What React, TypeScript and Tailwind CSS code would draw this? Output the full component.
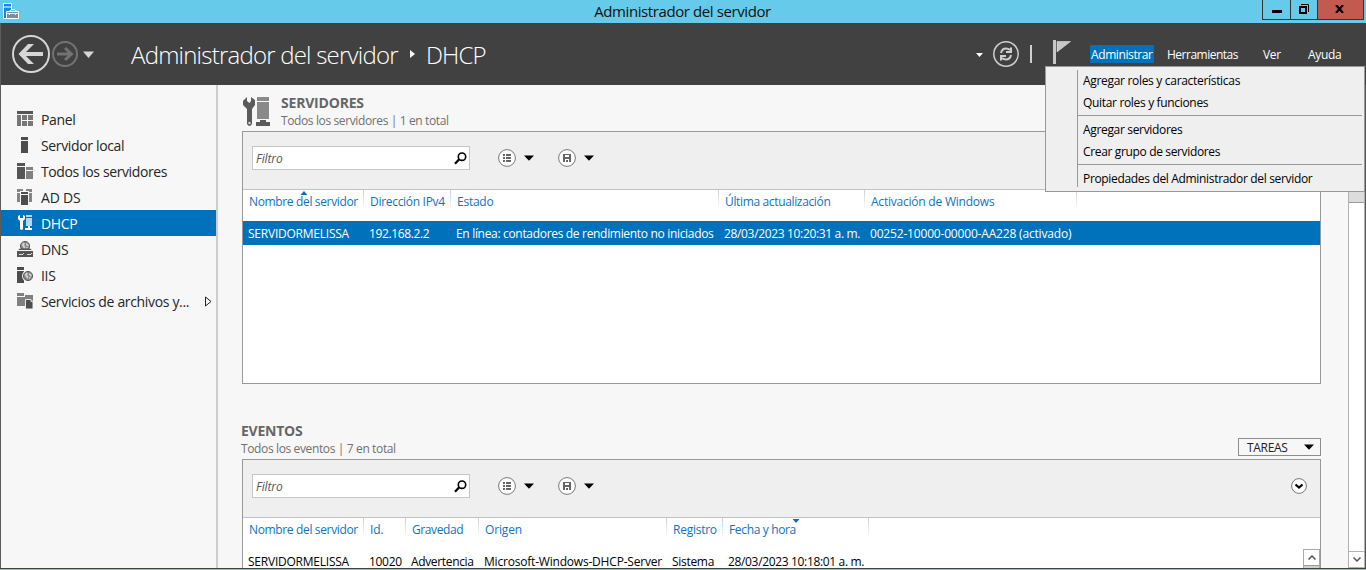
import type { ReactNode } from "react";

type Column = { label: string; cell: string; head: string; body: string; width: string; sort?: "up" | "down" };

const serverColumns: Column[] = [
  { label: "Nombre del servidor", cell: "SERVIDORMELISSA", head: "tracking-[-0.350px]", body: "tracking-[-0.230px]", width: "w-[121px]", sort: "up" },
  { label: "Dirección IPv4", cell: "192.168.2.2", head: "tracking-[-0.300px]", body: "tracking-[-0.380px]", width: "w-[87px]" },
  { label: "Estado", cell: "En línea: contadores de rendimiento no iniciados", head: "tracking-[-0.250px]", body: "tracking-[-0.320px]", width: "w-[268px]" },
  { label: "Última actualización", cell: "28/03/2023 10:20:31 a. m.", head: "tracking-[-0.350px]", body: "tracking-[-0.340px]", width: "w-[146px]" },
  { label: "Activación de Windows", cell: "00252-10000-00000-AA228 (activado)", head: "tracking-[-0.220px]", body: "tracking-[-0.180px]", width: "w-[212px]" },
];

const eventColumns: Column[] = [
  { label: "Nombre del servidor", cell: "SERVIDORMELISSA", head: "tracking-[-0.350px]", body: "tracking-[-0.230px]", width: "w-[121px]" },
  { label: "Id.", cell: "10020", head: "tracking-[-0.100px]", body: "tracking-[-0.300px]", width: "w-[42px]" },
  { label: "Gravedad", cell: "Advertencia", head: "tracking-[-0.400px]", body: "tracking-[-0.350px]", width: "w-[73px]" },
  { label: "Origen", cell: "Microsoft-Windows-DHCP-Server", head: "tracking-[-0.150px]", body: "tracking-[-0.200px]", width: "w-[188px]" },
  { label: "Registro", cell: "Sistema", head: "tracking-[-0.250px]", body: "tracking-[-0.300px]", width: "w-[56px]" },
  { label: "Fecha y hora", cell: "28/03/2023 10:18:01 a. m.", head: "tracking-[-0.350px]", body: "tracking-[-0.340px]", width: "w-[146px]", sort: "down" },
];

function Globe({ cx, cy }: { cx: number; cy: number }) {
  return (
    <g>
      <circle cx={cx} cy={cy} r="4.600" fill="#858585" stroke="#5c5c5c" />
      <path d={`M${cx - 3.5} ${cy - 1.5}l2-2 1.5 1-1 1.5 1.5 1.5-1 2.500-1.500-2zM${cx + 1} ${cy - 3}l2 1 1 2-1.500.500-1.500-1.500zM${cx + 1} ${cy + 1}l2 0-1.500 2.500z`} fill="#d0d0d0" />
    </g>
  );
}

const icons: Record<string, ReactNode> = {
  panel: (
    <>
      <path d="M0 0h16v3H0z" fill="#555" />
      <path d="M0 4h4v11H0zM5 4h5v5H5zM11 4h5v5h-5zM5 10h5v5H5zM11 10h5v5h-5z" fill="#777" />
    </>
  ),
  local: <path d="M4 0h7v3H4zM4 4h7v12H4z" fill="#4d4d4d" />,
  all: (
    <>
      <path d="M0 0h8v3H0zM0 4h8v12H0z" fill="#555" />
      <path d="M9 4h7v3H9zM9 8h7v8H9z" fill="#808080" />
    </>
  ),
  adds: (
    <>
      <path d="M0 0h6v2H3v1H0zM9 0h6v3h-3V2H9zM0 4h3v9H0zM12 4h3v9h-3z" fill="#858585" />
      <path d="M4 3h7v2H4zM4 6h7v10H4z" fill="#4d4d4d" />
    </>
  ),
  dhcp: (
    <>
      <path d="M1 1v3l2 2v8q1.500 2 3 0V6l2-2V1L6 0v3H3V0z" fill="#fff" />
      <path d="M9 0h6v2H9zM9 3h6v8H9z" fill="#b9d9f0" />
      <path d="M11 11h2v2h2v2H8v-2h3z" fill="#fff" />
    </>
  ),
  dns: (
    <>
      <Globe cx={8} cy={5} />
      <path d="M1 8h14v3H1z" fill="#f7f7f7" />
      <path d="M3 7.500h10l2 1.500H1zM0 10h16v6H0z" fill="#555" />
      <path d="M2 13h4v1H2zM10 13h4v1h-4zM6 12h1v1H6zM14 12h1v1h-1z" fill="#ddd" />
    </>
  ),
  iis: (
    <>
      <path d="M0 0h7v3H0zM0 4h7v12H0z" fill="#4d4d4d" />
      <circle cx="11" cy="9" r="6" fill="#f7f7f7" />
      <Globe cx={11} cy={9} />
    </>
  ),
  files: (
    <>
      <path d="M0 0h7v3H0zM0 4h8v9H0zM8 2h8v10H8z" fill="#808080" />
      <path d="M8.500 6.500H14L16 9v7H8.500z" fill="#4d4d4d" stroke="#f7f7f7" strokeWidth="0.9" />
      <path d="M13.500 6.500V9H16z" fill="#ccc" />
    </>
  ),
};

const navigation = [
  { icon: "panel", label: "Panel", spacing: "tracking-[-0.350px]" },
  { icon: "local", label: "Servidor local", spacing: "tracking-[-0.350px]" },
  { icon: "all", label: "Todos los servidores", spacing: "tracking-[-0.380px]" },
  { icon: "adds", label: "AD DS", spacing: "tracking-[-0.2px]" },
  { icon: "dhcp", label: "DHCP", spacing: "tracking-[-0.350px]", active: true },
  { icon: "dns", label: "DNS", spacing: "tracking-[-0.350px]" },
  { icon: "iis", label: "IIS", spacing: "tracking-[-0.3px]" },
  { icon: "files", label: "Servicios de archivos y...", spacing: "tracking-[-0.340px]", expandable: true },
];

function Caret() {
  return (
    <svg className="ml-2 h-[6px] w-[10px]" viewBox="0 0 10 6">
      <path d="M0 .5h10L5 5.800z" fill="#000" />
    </svg>
  );
}

function Toolbar({ collapsible }: { collapsible?: boolean }) {
  return (
    <div className="flex h-[58px] shrink-0 border-b border-[#c3c3c3] bg-[#efefef] pl-[9px] pt-[14px]">
      <div className="flex h-6 w-[218px] items-center justify-between border border-[#c6c6c6] bg-white pl-[3px] pr-[2px]">
        <span className="pt-[2px] text-[12px] italic leading-4 tracking-[-0.100px] text-[#555]">Filtro</span>
        <svg className="h-[13px] w-[13px]" viewBox="0 0 13 13" fill="none" stroke="#000">
          <circle cx="8" cy="4.700" r="3.700" strokeWidth="1.600" />
          <path d="M5 7.500L1 11.700" strokeWidth="2.300" />
        </svg>
      </div>
      <div className="ml-7 mt-[3px] flex h-[18px] items-center">
        <svg className="h-[18px] w-[18px]" viewBox="0 0 18 18">
          <circle cx="9" cy="9" r="8.400" fill="#fff" stroke="#777" />
          <path d="M5 5h2v2H5zM8 5h5v2H8zM5 8h2v2H5zM8 8h5v2H8zM5 11h2v2H5zM8 11h5v2H8z" fill="#666" />
        </svg>
        <Caret />
        <svg className="ml-6 h-[18px] w-[18px]" viewBox="0 0 18 18">
          <circle cx="9" cy="9" r="8.400" fill="#fff" stroke="#777" />
          <path fillRule="evenodd" d="M5 5h8v8H5zM7 6v2h4V6zM7 10v3h1v-2h2v2h1v-3z" fill="#666" />
        </svg>
        <Caret />
      </div>
      {collapsible && (
        <svg className="ml-auto mr-[13px] mt-1 h-4 w-4" viewBox="0 0 16 16" fill="none">
          <circle cx="8" cy="8" r="7.400" fill="#fff" stroke="#777" />
          <path d="M4.500 6.500L8 9.500l3.500-3" stroke="#000" strokeWidth="2.200" />
        </svg>
      )}
    </div>
  );
}

function Grid({ columns, selected }: { columns: Column[]; selected?: boolean }) {
  return (
    <div className="text-[12px] leading-4">
      <div className="flex h-[31px] text-[#1173bd]">
        {columns.map((c) => (
          <div key={c.label} className={`relative flex h-6 shrink-0 items-center whitespace-nowrap pl-[6px] ${c.width}`}>
            <span className={c.head}>{c.label}</span>
            <span className="absolute right-0 top-0 h-5 w-px bg-linear-to-b from-[#cfcfcf] to-white" />
            {c.sort && (
              <svg className="absolute left-1/2 top-[1px] h-1 w-[7px] -translate-x-1/2" viewBox="0 0 7 4">
                <path d={c.sort === "up" ? "M3.500 0L7 4H0z" : "M0 0h7L3.500 4z"} fill="#0072bc" />
              </svg>
            )}
          </div>
        ))}
      </div>
      <div className={selected ? "flex h-6 items-center bg-[#0072bc] pt-[2px] text-white" : "flex h-6 items-center pt-[2px] text-black"}>
        {columns.map((c) => (
          <div key={c.label} className={`shrink-0 whitespace-nowrap pl-[5px] ${c.width} ${c.body}`}>
            {c.cell}
          </div>
        ))}
      </div>
    </div>
  );
}

function MenuGroup({ items }: { items: { label: string; spacing: string }[] }) {
  return (
    <div>
      {items.map((item) => (
        <div key={item.label} className={`flex h-[22px] items-center whitespace-nowrap pl-[5px] ${item.spacing}`}>
          {item.label}
        </div>
      ))}
    </div>
  );
}

export default function App() {
  return (
    <div className="relative flex h-[570px] w-[1366px] flex-col overflow-hidden bg-[#f7f7f7] font-['Open_Sans',sans-serif]">
      <header className="flex h-[23px] shrink-0 justify-between bg-[#66cbea]">
        <svg className="ml-[3px] mt-[3px] h-4 w-4" viewBox="0 0 16 16">
          <path d="M.5.500h8v15h-8z" fill="#1b87d8" stroke="#fff" />
          <path d="M1 4h7" stroke="#fff" />
          <path d="M3.500 8.500h12v7h-12z" fill="#778f9f" stroke="#fff" />
          <path d="M6.500 8.500l1.500-2h4l1.500 2z" fill="#66cbea" stroke="#fff" />
          <path d="M4 10.500h11M6.500 10v2M12.500 10v2" stroke="#dcefff" />
        </svg>
        <h1 className="ml-[84px] flex h-[22px] items-center text-[15px] tracking-[-0.400px] text-[#111]">Administrador del servidor</h1>
        <div className="mr-[2px] flex h-5">
          <div className="flex w-[29px] items-center justify-center border border-t-0 border-[#333]">
            <span className="mt-1 h-[3px] w-[10px] bg-black" />
          </div>
          <div className="flex w-[26px] items-center justify-center border-b border-[#333]">
            <svg className="-mt-px mr-px h-[10px] w-[10px]" viewBox="0 0 10 10" fill="none" stroke="#000">
              <path d="M1 3h6v6H1z" strokeWidth="2" />
              <path d="M2 .5h7.500V8" />
            </svg>
          </div>
          <div className="flex w-[47px] items-center justify-center border border-t-0 border-[#333] bg-[#c35a50]">
            <svg className="-mt-px mr-[2px] h-2 w-[9px]" viewBox="0 0 9 8">
              <path d="M1 0l7 8M8 0L1 8" stroke="#000" strokeWidth="2.200" />
            </svg>
          </div>
        </div>
      </header>

      <div className="flex h-[62px] shrink-0 items-center border-l border-[#5c5c5c] bg-[#414141] text-white">
        <svg className="ml-[11px] h-[38px] w-[38px]" viewBox="0 0 38 38" fill="none" stroke="#d6d6d6">
          <circle cx="19" cy="19" r="18" strokeWidth="2" />
          <path d="M8 19h23" strokeWidth="4" />
          <path d="M16 9h6L12 19l10 10h-6L6.500 19z" fill="#d6d6d6" stroke="none" />
        </svg>
        <svg className="ml-[2px] h-[26px] w-[26px]" viewBox="0 0 26 26" fill="none" stroke="#737373">
          <circle cx="13" cy="13" r="12" strokeWidth="2" />
          <path d="M5 13h15M13 7l6.500 6-6.500 6" strokeWidth="3" />
        </svg>
        <svg className="ml-[5px] h-[7px] w-[11px]" viewBox="0 0 11 7">
          <path d="M0 .5h11L5.500 7z" fill="#d6d6d6" />
        </svg>
        <div className="ml-[37px] flex items-center whitespace-nowrap text-[24px] font-light leading-8">
          <span className="w-[279px] pt-[2px] tracking-[-0.780px]">Administrador del servidor</span>
          <svg className="h-2 w-[5px]" viewBox="0 0 5 8">
            <path d="M0 0l5 4-5 4z" fill="#fff" />
          </svg>
          <span className="ml-[11px] pt-[2px] tracking-[-0.900px]">DHCP</span>
        </div>
        <div className="ml-auto flex items-center">
          <svg className="mt-px h-1 w-[7px]" viewBox="0 0 7 4">
            <path d="M0 0h7L3.500 4z" fill="#fff" />
          </svg>
          <svg className="ml-[10px] h-[26px] w-[26px]" viewBox="0 0 26 26" fill="none" stroke="#cfcfcf">
            <circle cx="13" cy="13" r="12.200" strokeWidth="1.500" />
            <path d="M8 12q1-4.500 5-4.500 2.500 0 4 1.500M18 14q-1 4.500-5 4.500-2.500 0-4-1.500" strokeWidth="2" />
            <path d="M18 6.500v4.500h-5M8 19.500V15h5" strokeWidth="2" />
          </svg>
          <span className="ml-[11px] h-[18px] w-[2px] bg-[#cfcfcf]" />
          <svg className="ml-[21px] mb-1 h-[24px] w-[18px]" viewBox="0 0 18 24">
            <path d="M0 0h3v24H0z" fill="#c8c8c8" />
            <path d="M4 1.500H17.500L4 12z" fill="#c8c8c8" stroke="#eee" strokeWidth=".5" />
          </svg>
        </div>
        <nav className="flex w-[295px] items-center whitespace-nowrap pl-[19px] text-[12px] font-medium leading-[18px]">
          <span className="w-16 bg-[#0072bc] pl-[1px] tracking-[-0.400px]"><span className="relative top-px">Administrar</span></span>
          <span className="ml-[13px] w-[96px] pt-[2px] tracking-[-0.500px]">Herramientas</span>
          <span className="w-[45px] pt-[2px] tracking-[-0.300px]">Ver</span>
          <span className="pt-[2px] tracking-[-0.300px]">Ayuda</span>
        </nav>
      </div>

      <div className="flex h-[483px] shrink-0 overflow-hidden border-r border-r-[#555]">
        <aside className="w-[218px] shrink-0 border-l border-r-2 border-l-[#5c5c5c] border-r-[#cdcdcd] pt-[21px]">
          {navigation.map((item) => (
            <div
              key={item.label}
              className={`flex h-[26px] items-center whitespace-nowrap pl-4 text-[14px] leading-5 ${item.spacing} ${item.active ? "bg-[#0072bc] text-white" : "text-[#262626]"}`}
            >
              <svg className="mr-2 h-4 w-4 shrink-0" viewBox="0 0 16 16">
                {icons[item.icon]}
              </svg>
              <span className="pt-[2px]">{item.label}</span>
              {item.expandable && (
                <svg className="ml-auto mr-1 h-[11px] w-2" viewBox="0 0 8 11">
                  <path d="M1.500 1L7 5.500l-5.500 4.500z" fill="none" stroke="#222" />
                </svg>
              )}
            </div>
          ))}
        </aside>

        <main className="flex min-w-0 flex-1 flex-col pl-6">
          <div className="flex h-[46px] shrink-0 pt-[9px]">
            <svg className="ml-[1px] mt-[2px] h-[31px] w-7" viewBox="0 0 28 31">
              <path d="M4 1L0 5v4l4 4v15q2.500 4 5 0V13l3-4V4L8 1v4L6.500 7 4 5z" fill="#5b5b5b" />
              <circle cx="6.500" cy="27" r="1.200" fill="#ddd" />
              <path d="M14 1h12v4H14zM14 6h12v17H14z" fill="#898989" />
              <path d="M17 24h6v2h4v4H13v-4h4z" fill="#5b5b5b" />
            </svg>
            <div className="ml-[10px]">
              <h2 className="text-[14px] font-bold leading-[18px] tracking-[-0.200px] text-[#666]">SERVIDORES</h2>
              <p className="text-[12px] leading-[18px] tracking-[-0.380px] text-[#707070]">Todos los servidores | 1 en total</p>
            </div>
          </div>
          <section className="h-[253px] w-[1079px] shrink-0 border border-[#999] bg-white">
            <Toolbar />
            <Grid columns={serverColumns} selected />
          </section>

          <div className="flex h-[75px] w-[1079px] shrink-0 justify-between pt-[38px]">
            <div className="-ml-px">
              <h2 className="text-[14px] font-bold leading-[18px] tracking-[-0.250px] text-[#666]">EVENTOS</h2>
              <p className="text-[12px] leading-[18px] tracking-[-0.370px] text-[#707070]">Todos los eventos | 7 en total</p>
            </div>
            <button className="mt-4 flex h-[18px] w-[83px] items-center justify-between border border-[#8d8d8d] pl-2 pr-[6px] text-[12px] tracking-[-0.300px] text-[#222]">
              <span className="pt-px">TAREAS</span>
              <Caret />
            </button>
          </div>
          <section className="relative h-[130px] w-[1079px] shrink-0 border border-[#999] bg-white">
            <Toolbar collapsible />
            <Grid columns={eventColumns} />
            <div className="absolute right-0 top-[89px] h-[22px] w-[17px] border border-[#aaa] bg-[#d0d0d0]">
              <div className="flex h-4 items-center justify-center border-b border-[#999] bg-white">
                <svg className="h-[5px] w-2" viewBox="0 0 8 5">
                  <path d="M.5 4.500L4 1l3.500 3.500" fill="none" stroke="#555" strokeWidth="1.500" />
                </svg>
              </div>
            </div>
          </section>
        </main>

        <div className="flex w-[17px] shrink-0 flex-col justify-between border-x border-[#b2b2b2] bg-white">
          <div className="h-[118px] border-b border-[#999] bg-[#dcdcdc]" />
          <div className="flex h-[17px] items-center justify-center border-y border-[#b2b2b2]">
            <svg className="h-[5px] w-2" viewBox="0 0 8 5">
              <path d="M.5.500L4 4 7.500.500" fill="none" stroke="#555" strokeWidth="1.500" />
            </svg>
          </div>
        </div>
      </div>

      <footer className="h-[2px] shrink-0 border-t border-[#444] bg-[#66cbea]" />

      <div className="absolute left-[1045px] top-[66px] h-[126px] w-[320px] border border-[#999] bg-[#efefef] pt-[3px] pl-[31px] pr-[2px] text-[12px] leading-4 text-black">
        <div className="h-[117px] border-l border-[#999]">
          <MenuGroup items={[{ label: "Agregar roles y características", spacing: "tracking-[-0.310px]" }, { label: "Quitar roles y funciones", spacing: "tracking-[-0.330px]" }]} />
          <div className="mt-px mb-[3px] h-px bg-[#999]" />
          <MenuGroup items={[{ label: "Agregar servidores", spacing: "tracking-[-0.330px]" }, { label: "Crear grupo de servidores", spacing: "tracking-[-0.350px]" }]} />
          <div className="mt-px mb-[3px] h-px bg-[#999]" />
          <MenuGroup items={[{ label: "Propiedades del Administrador del servidor", spacing: "tracking-[-0.330px]" }]} />
        </div>
      </div>
    </div>
  );
}
